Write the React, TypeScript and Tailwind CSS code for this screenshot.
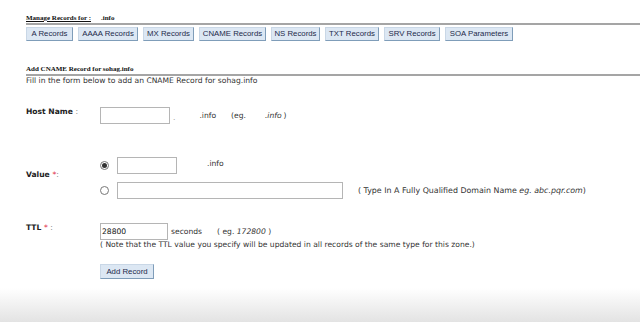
export default function App() {
  const tabs = [
    { label: "A Records", w: "w-[47px]" },
    { label: "AAAA Records", w: "w-[60px]" },
    { label: "MX Records", w: "w-[51px]" },
    { label: "CNAME Records", w: "w-[67px]" },
    { label: "NS Records", w: "w-[49px]" },
    { label: "TXT Records", w: "w-[54px]" },
    { label: "SRV Records", w: "w-[56px]" },
    { label: "SOA Parameters", w: "w-[68px]" },
  ];

  const verdana = "font-['DejaVu_Sans',Verdana,sans-serif]";
  const tahoma = "font-['Liberation_Sans',Tahoma,sans-serif]";

  return (
    <div className="flex h-[322px] w-[640px] flex-col overflow-hidden bg-white text-[#333]">
      {/* manage records header */}
      <div className="ml-[26px] mt-[14px] border-b-2 border-[#a5a5a5] pb-[1px] font-['Liberation_Serif',serif] text-[7px] font-bold leading-[8px] text-[#111]">
        <span className="underline">Manage Records for :</span>
        <span className="ml-[10px]">.info</span>
      </div>

      <div className="ml-[26px] mt-[2px] flex gap-[5px]">
        {tabs.map((t) => (
          <button
            key={t.label}
            className={`${t.w} ${tahoma} h-[14px] border border-b-[#7f9db9] border-l-[#c9d7e6] border-r-[#7f9db9] border-t-[#c9d7e6] bg-[#dce7f3] text-[7.8px] leading-[12px] text-[#1d2a4a]`}>
            {t.label}
          </button>
        ))}
      </div>

      {/* add cname header */}
      <div className="ml-[26px] mt-[24px] border-b-2 border-[#a5a5a5] pb-[1px] font-['Liberation_Serif',serif] text-[7px] font-bold leading-[8px] text-[#111]">
        Add CNAME Record for sohag.info
      </div>
      <p className={`${verdana} ml-[26px] text-[7.6px] leading-[10px] text-[#333]`}>
        Fill in the form below to add an CNAME Record for sohag.info
      </p>

      {/* host name */}
      <div className={`${verdana} ml-[26px] mt-[21px] flex text-[7.6px]`}>
        <div className="mt-[-1px] w-[74px] font-bold text-[#222]">
          Host Name <span className="font-normal text-[#888]">:</span>
        </div>
        <div className="h-[17px] w-[70px] border border-[#b5b5b5] bg-white" />
        <span className="ml-[3px] mt-[5px] text-[#999]">.</span>
        <span className="ml-[24px] mt-[3px] text-[#333]">.info</span>
        <span className="ml-[15px] mt-[3px] text-[#333]">(eg.</span>
        <span className="ml-[19px] mt-[3px] italic text-[#333]">.info</span>
        <span className="ml-[2px] mt-[3px] text-[#333]">)</span>
      </div>

      {/* value */}
      <div className={`${verdana} ml-[26px] mt-[33px] flex text-[7.6px]`}>
        <div className="mt-[12px] w-[74px] font-bold text-[#222]">
          Value <span className="font-normal text-[#e0304a]">*</span>
          <span className="font-normal text-[#888]">:</span>
        </div>
        <div className="flex flex-col gap-[8px]">
          <div className="flex items-center">
            <span className="flex h-[9px] w-[9px] items-center justify-center rounded-full border border-[#777] bg-white">
              <span className="h-[5px] w-[5px] rounded-full bg-[#333]" />
            </span>
            <div className="ml-[8px] h-[17px] w-[60px] border border-[#b5b5b5] bg-white" />
            <span className="ml-[30px] mb-[4px] text-[#333]">.info</span>
          </div>
          <div className="flex items-center">
            <span className="h-[9px] w-[9px] rounded-full border border-[#777] bg-white" />
            <div className="ml-[8px] h-[17px] w-[226px] border border-[#b5b5b5] bg-white" />
            <span className="ml-[15px] text-[7.9px] text-[#333]">
              ( Type In A Fully Qualified Domain Name <i>eg. abc.pqr.com</i>)
            </span>
          </div>
        </div>
      </div>

      {/* ttl */}
      <div className={`${verdana} ml-[26px] mt-[24px] flex text-[7.6px]`}>
        <div className="mt-[-1px] w-[74px] font-bold text-[#222]">
          TTL <span className="font-normal text-[#e0304a]">*</span>
          <span className="font-normal text-[#888]"> :</span>
        </div>
        <div className="flex flex-col">
          <div className="flex items-center">
            <div className="h-[17px] w-[68px] border border-[#b5b5b5] bg-white pl-[1px] leading-[15px] text-[#111]">
              28800
            </div>
            <span className="ml-[3px]">seconds</span>
            <span className="ml-[15px]">
              ( eg. <i>172800</i> )
            </span>
          </div>
          <div className="leading-[10px]">
            ( Note that the TTL value you specify will be updated in all records of the same type for this zone.)
          </div>
          <button
            className={`${tahoma} mt-[14px] h-[15px] w-[54px] border border-b-[#7f9db9] border-l-[#c9d7e6] border-r-[#7f9db9] border-t-[#c9d7e6] bg-[#dce7f3] text-[7.8px] leading-[13px] text-[#1d2a4a]`}>
            Add Record
          </button>
        </div>
      </div>

      <div className="mt-auto h-[34px] bg-linear-to-b from-white to-[#e3e3e3]" />
    </div>
  );
}
